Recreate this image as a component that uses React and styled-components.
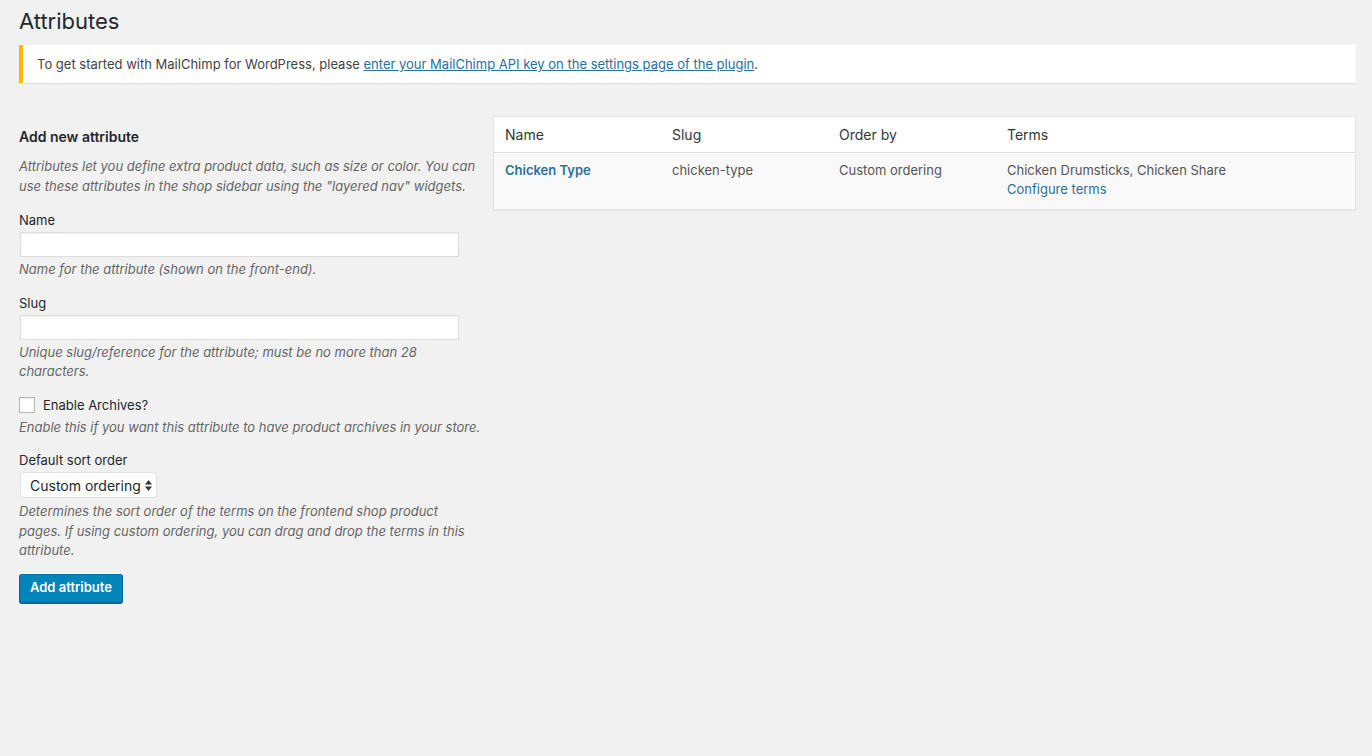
import React from "react";
import styled, { createGlobalStyle } from "styled-components";

const GlobalStyle = createGlobalStyle`
  html, body {
    margin: 0;
    padding: 0;
    background: #f1f1f1;
    color: #444;
    font-family: Inter, "Noto Sans", sans-serif;
    font-size: 13px;
  }
`;

const Wrap = styled.div`
  padding: 0 16px 40px 19px;
`;

const PageTitle = styled.h1`
  margin: 0;
  padding: 8px 0 11px;
  font-size: 22px;
  font-weight: 400;
  line-height: 1.2;
  color: #23282d;
`;

const Notice = styled.div`
  background: #fff;
  border-left: 4px solid #ffb900;
  box-shadow: 0 1px 1px rgba(0, 0, 0, 0.08);
  padding: 10px 14px 10px 14px;
  line-height: 18px;
  color: #444;
`;

const Link = styled.a`
  color: #2a6f9e;
  text-decoration: ${(p) => (p.$underline ? "underline" : "none")};
  font-weight: ${(p) => (p.$bold ? 600 : 400)};
  cursor: pointer;
`;

const Columns = styled.div`
  display: grid;
  grid-template-columns: 468px 1fr;
  column-gap: 6px;
  margin-top: 33px;
`;

const FormCol = styled.div`
  display: flex;
  flex-direction: column;
  padding-top: 11px;
`;

const SectionTitle = styled.h2`
  margin: 0 0 10px;
  font-size: 14px;
  font-weight: 600;
  color: #23282d;
  line-height: 20px;
`;

const Help = styled.p`
  margin: 0;
  font-style: italic;
  color: #666;
  font-size: 13px;
  line-height: 19.5px;
`;

const Field = styled.div`
  display: flex;
  flex-direction: column;
  align-items: flex-start;
  margin-top: ${(p) => p.$top || 14}px;
`;

const Label = styled.label`
  color: #23282d;
  line-height: 18px;
  margin-bottom: 3px;
`;

const TextInput = styled.input`
  box-sizing: border-box;
  width: 439px;
  height: 25px;
  margin: 0 0 3px 1px;
  border: 1px solid #ddd;
  background: #fff;
  box-shadow: inset 0 1px 2px rgba(0, 0, 0, 0.07);
  font: inherit;
`;

const CheckRow = styled.label`
  display: flex;
  align-items: center;
  gap: 8px;
  color: #23282d;
  margin: 1px 0 5px;
`;

const CheckBox = styled.span`
  box-sizing: border-box;
  width: 16px;
  height: 16px;
  border: 1px solid #b4b9be;
  background: #fff;
  box-shadow: inset 0 1px 2px rgba(0, 0, 0, 0.1);
`;

const Select = styled.div`
  box-sizing: border-box;
  display: flex;
  align-items: center;
  gap: 4px;
  height: 26px;
  margin: 0 0 4px 1px;
  padding: 0 4px 0 9px;
  background: #fff;
  border: 1px solid #e2e2e2;
  border-radius: 4px;
  color: #23282d;
  font-size: 14px;
`;

const Arrows = styled.svg`
  width: 7px;
  height: 11px;
`;

const Button = styled.button`
  align-self: flex-start;
  margin-top: 13px;
  height: 29px;
  padding: 0 10px 2px;
  background: #0085ba;
  border: 1px solid #0073aa;
  border-color: #0073aa #006799 #006799;
  border-radius: 3px;
  box-shadow: 0 1px 0 #006799;
  color: #fff;
  font: inherit;
  font-weight: 600;
  font-size: 13px;
`;

const Table = styled.table`
  width: 100%;
  border-collapse: collapse;
  background: #fff;
  border: 1px solid #e5e5e5;
  box-shadow: 0 1px 1px rgba(0, 0, 0, 0.04);
  table-layout: fixed;
`;

const Th = styled.th`
  text-align: left;
  font-weight: 400;
  color: #32373c;
  font-size: 14px;
  padding: 8px 11px;
  height: 19px;
  border-bottom: 1px solid #e1e1e1;
  width: ${(p) => p.$w || "auto"};
`;

const Tr = styled.tr`
  background: #f9f9f9;
`;

const Td = styled.td`
  vertical-align: top;
  padding: 8px 11px 10px;
  color: #555;
  font-size: 13px;
  line-height: 19px;
  height: 38px;
`;

export default function App() {
  return (
    <Wrap>
      <GlobalStyle />
      <PageTitle>Attributes</PageTitle>
      <Notice>
        To get started with MailChimp for WordPress, please{" "}
        <Link $underline>enter your MailChimp API key on the settings page of the plugin</Link>.
      </Notice>

      <Columns>
        <FormCol>
          <SectionTitle>Add new attribute</SectionTitle>
          <Help>
            Attributes let you define extra product data, such as size or color. You can
            <br />
            use these attributes in the shop sidebar using the "layered nav" widgets.
          </Help>

          <Field $top={15}>
            <Label>Name</Label>
            <TextInput />
            <Help>Name for the attribute (shown on the front-end).</Help>
          </Field>

          <Field>
            <Label>Slug</Label>
            <TextInput />
            <Help>
              Unique slug/reference for the attribute; must be no more than 28
              <br />
              characters.
            </Help>
          </Field>

          <Field>
            <CheckRow>
              <CheckBox />
              Enable Archives?
            </CheckRow>
            <Help>Enable this if you want this attribute to have product archives in your store.</Help>
          </Field>

          <Field $top={14}>
            <Label>Default sort order</Label>
            <Select>
              Custom ordering
              <Arrows viewBox="0 0 7 11">
                <path d="M3.5 0 L7 4.5 H0 Z" fill="#333" />
                <path d="M3.5 11 L7 6.5 H0 Z" fill="#333" />
              </Arrows>
            </Select>
            <Help>
              Determines the sort order of the terms on the frontend shop product
              <br />
              pages. If using custom ordering, you can drag and drop the terms in this
              <br />
              attribute.
            </Help>
          </Field>

          <Button>Add attribute</Button>
        </FormCol>

        <div>
          <Table>
            <thead>
              <tr>
                <Th $w="145px">Name</Th>
                <Th $w="145px">Slug</Th>
                <Th $w="146px">Order by</Th>
                <Th>Terms</Th>
              </tr>
            </thead>
            <tbody>
              <Tr>
                <Td>
                  <Link $bold>Chicken Type</Link>
                </Td>
                <Td>chicken-type</Td>
                <Td>Custom ordering</Td>
                <Td>
                  Chicken Drumsticks, Chicken Share
                  <br />
                  <Link>Configure terms</Link>
                </Td>
              </Tr>
            </tbody>
          </Table>
        </div>
      </Columns>
    </Wrap>
  );
}
